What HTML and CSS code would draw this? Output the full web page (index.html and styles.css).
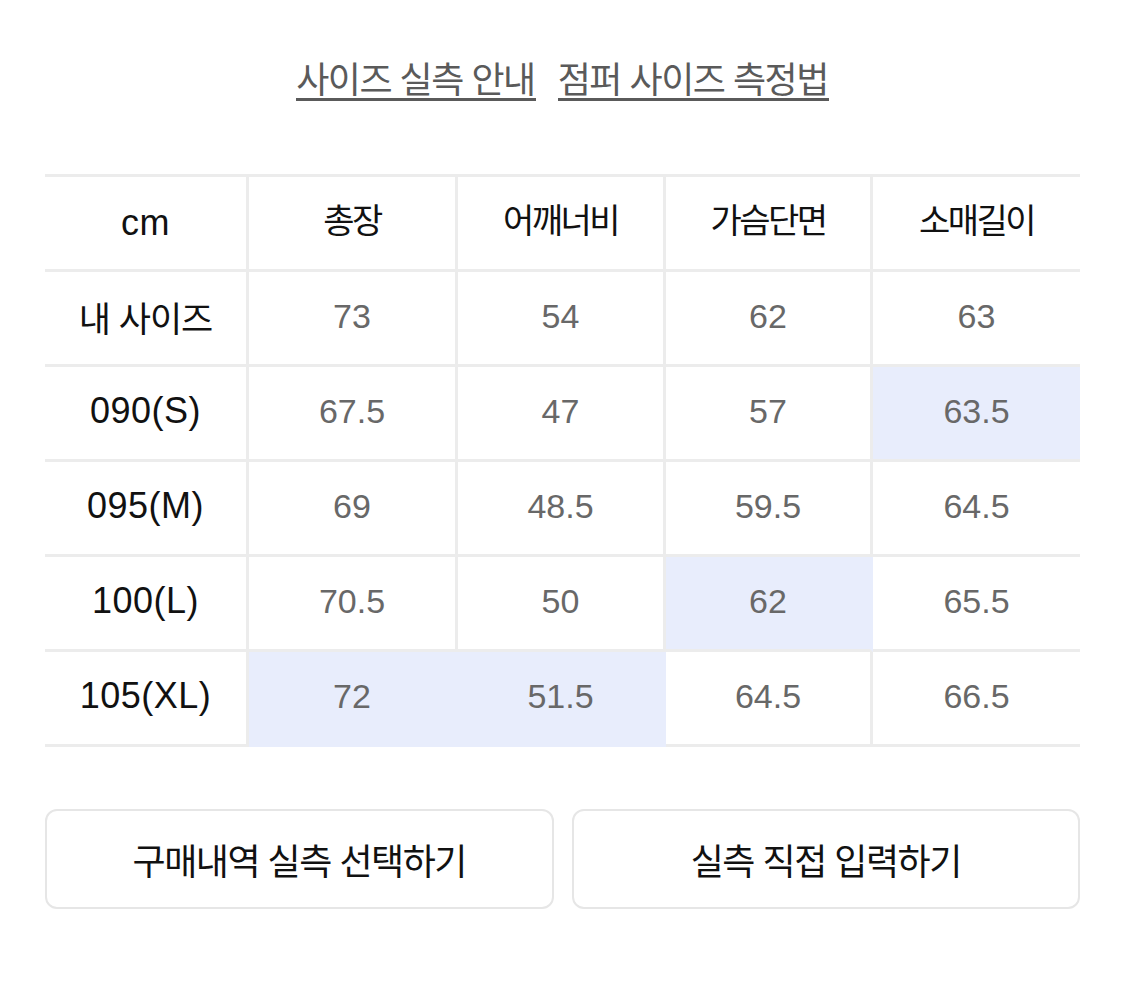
FILE: index.html
```html
<!DOCTYPE html>
<html lang="ko">
<head>
<meta charset="utf-8">
<title>사이즈 실측</title>
<link rel="stylesheet" href="styles.css">
</head>
<body>
<div class="page">
  <nav class="links">
    <a class="link" href="#">사이즈 실측 안내</a>
    <a class="link" href="#">점퍼 사이즈 측정법</a>
  </nav>

  <table class="size-table">
    <colgroup>
      <col class="col-label">
      <col class="col-a"><col class="col-b"><col class="col-c"><col class="col-c">
    </colgroup>
    <thead>
      <tr>
        <th class="label cm">cm</th>
        <th class="head">총장</th>
        <th class="head">어깨너비</th>
        <th class="head">가슴단면</th>
        <th class="head">소매길이</th>
      </tr>
    </thead>
    <tbody>
      <tr>
        <th class="label mine">내 사이즈</th>
        <td>73</td><td>54</td><td>62</td><td>63</td>
      </tr>
      <tr>
        <th class="label">090(S)</th>
        <td>67.5</td><td>47</td><td>57</td><td class="hl">63.5</td>
      </tr>
      <tr>
        <th class="label">095(M)</th>
        <td>69</td><td>48.5</td><td>59.5</td><td>64.5</td>
      </tr>
      <tr>
        <th class="label">100(L)</th>
        <td>70.5</td><td>50</td><td class="hl">62</td><td>65.5</td>
      </tr>
      <tr>
        <th class="label">105(XL)</th>
        <td class="hl">72</td><td class="hl">51.5</td><td>64.5</td><td>66.5</td>
      </tr>
    </tbody>
  </table>

  <div class="actions">
    <button class="btn" type="button">구매내역 실측 선택하기</button>
    <button class="btn" type="button">실측 직접 입력하기</button>
  </div>
</div>
</body>
</html>
```

FILE: styles.css
```css
html, body {
  margin: 0;
  padding: 0;
  background: #ffffff;
}

.page {
  width: 1035px;
  padding: 55px 45px 0;
  font-family: "Noto Sans CJK KR", "Liberation Sans", sans-serif;
}

.links {
  display: flex;
  justify-content: center;
  gap: 22px;
  height: 119px;
}

.link {
  color: #5a5a5a;
  font-size: 36px;
  letter-spacing: -1.5px;
  line-height: 44px;
  height: 43px;
  text-decoration: none;
  border-bottom: 3px solid #5a5a5a;
  padding-right: 1px;
}

.size-table {
  width: 1035px;
  border-collapse: separate;
  border-spacing: 0;
  table-layout: fixed;
}

.col-label { width: 204px; }
.col-a { width: 209px; }
.col-b { width: 208px; }
.col-c { width: 207px; }

.size-table th,
.size-table td {
  height: 88px;
  padding: 0 0 4px;
  text-align: center;
  vertical-align: middle;
  border-right: 3px solid #ececec;
  border-bottom: 3px solid #ececec;
  box-sizing: content-box;
}

.size-table thead th {
  border-top: 3px solid #ececec;
}

.size-table tr > :last-child {
  border-right: none;
}

.size-table .label {
  font-family: "Liberation Sans", "Noto Sans CJK KR", sans-serif;
  font-weight: 400;
  font-size: 36px;
  letter-spacing: 0.5px;
  color: #111111;
}

.size-table .label.cm {
  padding: 2px 0 2px;
}

.size-table .label.mine {
  font-family: "Noto Sans CJK KR", sans-serif;
  font-size: 35px;
  letter-spacing: -1px;
}

.size-table .head {
  font-family: "Noto Sans CJK KR", sans-serif;
  font-weight: 400;
  font-size: 34px;
  letter-spacing: -2.5px;
  color: #111111;
  padding: 0 0 9px;
  height: 83px;
}

.size-table td {
  font-family: "Liberation Sans", sans-serif;
  font-size: 34px;
  color: #686868;
}

.size-table td.hl {
  background: #e8edfc;
  border-right-color: #e8edfc;
}

.size-table tbody tr:last-child td.hl {
  border-bottom-color: #e8edfc;
}

.actions {
  display: flex;
  gap: 18px;
  margin-top: 62px;
}

.btn {
  flex: 1;
  height: 100px;
  background: #ffffff;
  border: 2px solid #e6e6e6;
  border-radius: 12px;
  font-family: "Noto Sans CJK KR", sans-serif;
  font-size: 36px;
  letter-spacing: -1.5px;
  color: #111111;
  padding: 0;
}
```
